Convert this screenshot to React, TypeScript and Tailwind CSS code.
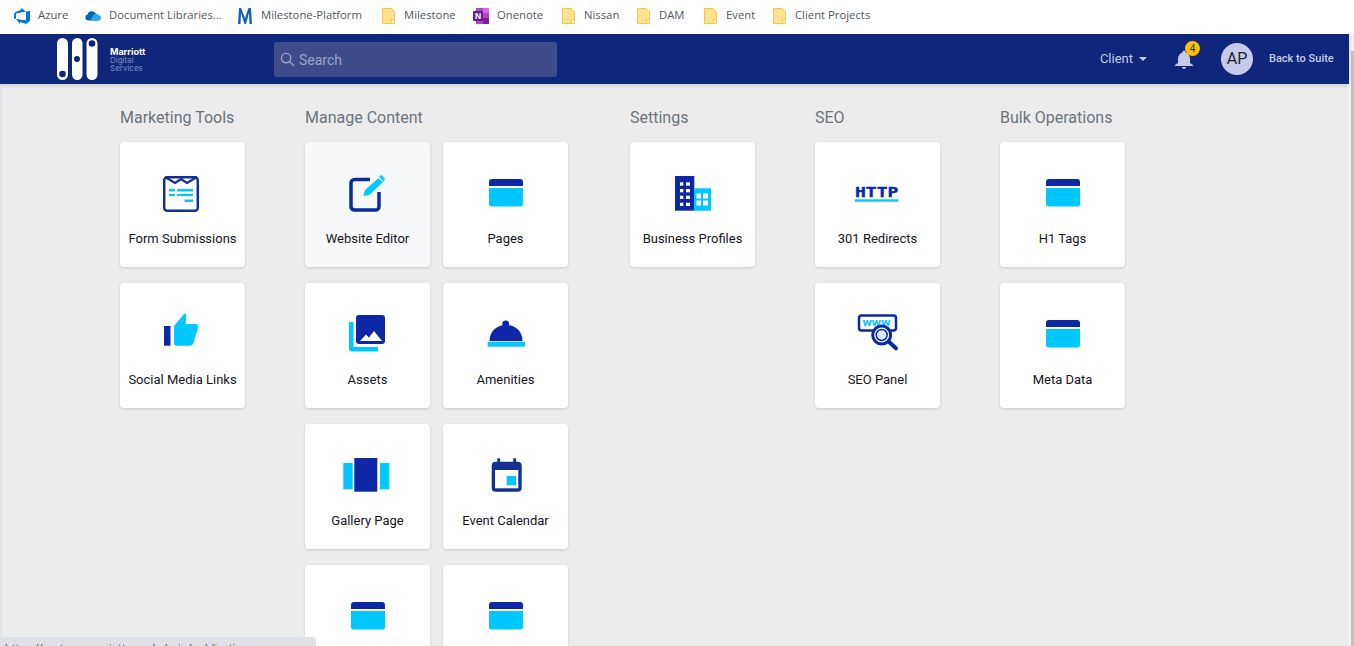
import { ReactNode } from "react"

const NAVY = "#0e27a6"
const CYAN = "#00c8ff"

const PagesIcon = () => (
  <g transform="translate(1 0)">
    <path d="M1 16V12a3 3 0 0 1 3-3h28a3 3 0 0 1 3 3v4z" fill={NAVY} />
    <path d="M1 18h34v16a2.500 2.500 0 0 1-2.500 2.500h-29A2.500 2.500 0 0 1 1 34z" fill={CYAN} />
  </g>
)

const FormIcon = () => (
  <>
    <rect x="0.200" y="7.200" width="33.600" height="33.600" rx="3" fill="none" stroke="#12308f" strokeWidth="2.500" />
    <path d="M1 7l10 6 6-4 6 4 10-6" fill="none" stroke="#12308f" strokeWidth="2.200" />
    <path d="M5 19h6v2.500H5zM13 19h16v2.500H13zM5 24h6v2H5zM13 24h16v2H13zM20.500 29.500H29V32h-8.500z" fill={CYAN} />
  </>
)

const EditorIcon = () => (
  <>
    <path
      d="M21 9.500H5.500A3.500 3.500 0 0 0 2 13v23.500A3.500 3.500 0 0 0 5.500 40h21a3.500 3.500 0 0 0 3.500-3.500V22"
      fill="none"
      stroke="#0c2aa0"
      strokeWidth="3.500"
    />
    <path d="M14.300 26l1.700-6L29.300 8.300l4.400 4L20.300 25z" fill={CYAN} />
    <path d="M30 6.600L32.700 5 36 9.300l-1.700 2.400z" fill={CYAN} />
  </>
)

const ThumbIcon = () => (
  <>
    <rect x="0" y="15" width="6.500" height="19.700" fill={NAVY} />
    <path
      d="M10 15L20 3q1.500-1 2.500 1l-1 9H32q3 0 2 4l-4.500 15q-1 2.700-3.500 2.700H12q-2 0-2-2.700z"
      fill={CYAN}
    />
  </>
)

const AssetsIcon = () => (
  <>
    <path d="M0 11h4.500v25H29v4.500H3q-3 0-3-3z" fill={CYAN} />
    <rect x="7" y="4" width="29" height="29" rx="3" fill={NAVY} />
    <path d="M11 30l6-6.500 3 3L25 20l8 10z" fill="#fff" />
  </>
)

const AmenitiesIcon = () => (
  <>
    <circle cx="18.700" cy="13" r="3.500" fill={NAVY} />
    <path d="M2.500 30C2.500 20 10 14 19 14s16.500 6 16.500 16z" fill={NAVY} />
    <rect x="0.700" y="30.700" width="37.300" height="5" fill={CYAN} />
  </>
)

const GalleryIcon = () => (
  <>
    <rect x="-5.700" y="11" width="9.400" height="26.300" fill={CYAN} />
    <rect x="5.300" y="6" width="23" height="33.700" fill={NAVY} />
    <rect x="31" y="11" width="9.300" height="26.300" fill={CYAN} />
  </>
)

const CalendarIcon = () => (
  <>
    <rect x="10.300" y="6.300" width="2.800" height="6" fill="#12308f" />
    <rect x="26.300" y="6.300" width="2.800" height="6" fill="#12308f" />
    <rect x="4.700" y="9.700" width="30" height="30" rx="4" fill="#12308f" />
    <rect x="8" y="18" width="23.300" height="18.300" fill="#fff" />
    <rect x="19.700" y="24" width="9.300" height="9.300" fill={CYAN} />
  </>
)

const BuildingIcon = () => (
  <>
    <rect x="1" y="6" width="19.300" height="34.700" fill={NAVY} />
    {[12.3, 19, 25.7, 32.7].map((y) => (
      <g key={y} fill="#fff">
        <rect x="6" y={y} width="3.300" height="3.300" />
        <rect x="12" y={y} width="4" height="3.300" />
      </g>
    ))}
    <rect x="20" y="18.300" width="17" height="22.400" fill={CYAN} />
    <g fill="#fff">
      <rect x="22.500" y="23.500" width="4.500" height="5" />
      <rect x="29" y="23.500" width="5" height="5" />
      <rect x="22.500" y="30.500" width="4.500" height="5" />
      <rect x="29" y="30.500" width="5" height="5" />
    </g>
  </>
)

const HttpIcon = () => (
  <>
    <text
      x="-4"
      y="27.300"
      fill={NAVY}
      stroke={NAVY}
      strokeWidth="0.400"
      fontSize="14.500"
      fontWeight="700"
      textLength="43.300"
      lengthAdjust="spacingAndGlyphs"
      className="font-['DejaVu_Sans_Mono',monospace]"
    >
      HTTP
    </text>
    <rect x="-4" y="29.300" width="43.300" height="2.400" fill={CYAN} />
  </>
)

const SeoIcon = () => (
  <>
    <rect x="0" y="4.500" width="37" height="15" rx="2.500" fill="none" stroke="#0c2aa0" strokeWidth="2.500" />
    <text
      x="3.500"
      y="15"
      fill={CYAN}
      fontSize="10"
      fontWeight="700"
      textLength="28"
      lengthAdjust="spacingAndGlyphs"
      className="font-['Roboto',sans-serif]"
    >
      www
    </text>
    <path d="M29 30l8 7.300" stroke="#0c2aa0" strokeWidth="4" strokeLinecap="round" />
    <circle cx="22.700" cy="24" r="9" fill="#fff" stroke="#0c2aa0" strokeWidth="3" />
    <circle cx="22.700" cy="24" r="5.500" fill="#dfe8fb" stroke="#0c2aa0" strokeWidth="1.500" />
  </>
)

const Card = ({ label, icon, active }: { label: string; icon: ReactNode; active?: boolean }) => (
  <div
    className={`flex h-[125px] w-[125px] flex-col items-center rounded-[4px] pt-7 shadow-[0_1px_3px_rgba(0,0,0,0.15)] ${
      active ? "bg-[#f7f8fa]" : "bg-white"
    }`}
  >
    <svg viewBox="0 0 36 42" className="mr-px h-[42px] w-9 shrink-0 overflow-visible">
      {icon}
    </svg>
    <span className="mt-[17px] text-[13px] leading-5 whitespace-nowrap text-[#15151c]">{label}</span>
  </div>
)

const Column = ({ title, className, children }: { title: string; className: string; children: ReactNode }) => (
  <section className={className}>
    <h2 className="mb-3 text-base leading-6 text-[#6c757d]">{title}</h2>
    {children}
  </section>
)

const Folder = () => (
  <svg viewBox="0 0 13 16" className="mr-px h-4 w-[13px] shrink-0">
    <path d="M.5.500h9l3 3v12H.5z" fill="#ffe28f" stroke="#f6c64c" />
    <rect x="9.500" y="11.500" width="3" height="4" fill="#fff3c9" stroke="#f6c64c" strokeWidth=".8" />
  </svg>
)

const bookmarks = [
  {
    label: "Azure",
    width: "w-[71px]",
    icon: (
      <svg viewBox="0 0 24 24" className="h-4 w-4 shrink-0" fill="#0078d4">
        <path d="M0 8.877L2.247 5.91l8.405-3.416V.022l7.37 5.393L2.966 8.338v8.225L0 15.707zm24-4.450v14.651l-5.753 4.900-9.303-3.057v3.056l-5.978-7.416 15.057 1.798V5.415z" />
      </svg>
    ),
  },
  {
    label: "Document Libraries...",
    width: "w-[153px]",
    icon: (
      <svg viewBox="0 0 17 11" className="-mr-px h-[11px] w-[17px] shrink-0">
        <path d="M3 10.500A3 3 0 0 1 2.500 4.600 4.500 4.500 0 0 1 10.500 3L14 10.500z" fill="#0364b8" />
        <path d="M5.500 10.500L8 5.500a4 4 0 0 1 6.500 0A2.700 2.700 0 0 1 14 10.500z" fill="#28a8ea" />
      </svg>
    ),
  },
  {
    label: "Milestone-Platform",
    width: "w-[144px]",
    icon: (
      <svg viewBox="0 0 14 16" className="mr-px h-4 w-[14px] shrink-0">
        <path d="M1 0h2L7 10 10.500 0H13l1 16h-2.500L11 5 8 16H6.500L3 5 2.500 16H0z" fill="#1164b4" />
      </svg>
    ),
  },
  { label: "Milestone", width: "w-[91px]", icon: <Folder /> },
  {
    label: "Onenote",
    width: "w-[89px]",
    icon: (
      <svg viewBox="0 0 16 16" className="h-4 w-4 shrink-0">
        <rect x="3" y="0" width="13" height="16" fill="#b146c2" />
        <rect x="10" y="0" width="6" height="5" fill="#d966e0" />
        <rect x="10" y="10" width="6" height="6" fill="#7e1f9b" />
        <rect x="0" y="3" width="10" height="10" rx="1" fill="#6a1b9a" />
        <text x="2" y="11" fill="#fff" fontSize="8.500" fontWeight="700" className="font-['Liberation_Sans',sans-serif]">
          N
        </text>
      </svg>
    ),
  },
  { label: "Nissan", width: "w-[75px]", icon: <Folder /> },
  { label: "DAM", width: "w-[67px]", icon: <Folder /> },
  { label: "Event", width: "w-[69px]", icon: <Folder /> },
  { label: "Client Projects", width: "w-[110px]", icon: <Folder /> },
]

export default function App() {
  return (
    <div className="relative flex h-[646px] w-[1354px] flex-col overflow-hidden bg-white font-['Roboto',sans-serif]">
      {/* browser bookmarks */}
      <nav className="flex h-[34px] shrink-0 items-center bg-white pb-[3px] pl-[14px] font-['Open_Sans',sans-serif] text-[11.300px] text-[#55585e]">
        {bookmarks.map((b) => (
          <div key={b.label} className={`flex items-center gap-2 ${b.width}`}>
            {b.icon}
            <span className="-mt-px whitespace-nowrap">{b.label}</span>
          </div>
        ))}
      </nav>

      <div className="flex min-h-0 flex-1">
        <div className="flex w-[1349px] flex-col">
          <header className="z-10 flex h-[50px] shrink-0 items-center bg-[#10267b] shadow-[0_2px_4px_rgba(0,0,0,0.12)]">
            <div className="flex w-[274px] items-center pl-[57px]">
              <svg viewBox="0 0 41 42" className="h-[42px] w-[41px] shrink-0">
                <rect x="0" y="0" width="11" height="42" rx="5.500" fill="#fff" />
                <rect x="15" y="0" width="10.500" height="42" rx="5.200" fill="#fff" />
                <rect x="29.500" y="0" width="11" height="42" rx="5.500" fill="#fff" />
                <circle cx="5.500" cy="36" r="3.300" fill="#10267b" />
                <circle cx="20" cy="21" r="3" fill="#10267b" />
                <circle cx="35" cy="5.500" r="3.300" fill="#10267b" />
              </svg>
              <div className="mt-px ml-3 flex flex-col font-['Inter',sans-serif] text-[8px] leading-[8px] text-[#7f8abf]">
                <span className="text-[9px] font-bold text-white">Marriott</span>
                <span>Digital</span>
                <span>Services</span>
              </div>
            </div>
            <div className="flex h-[35px] w-[283px] items-center gap-1 rounded-[3px] bg-[#3f4b8a] pl-[6px] text-sm text-[#9aa2c6]">
              <svg viewBox="0 0 16 16" className="h-[15px] w-[15px]" fill="none" stroke="#9aa2c6" strokeWidth="1.500">
                <circle cx="6.500" cy="6.500" r="5" />
                <path d="M10 10l5 5" />
              </svg>
              <span className="pt-0.5">Search</span>
            </div>
            <div className="ml-auto flex items-center text-[#c5cae9]">
              <span className="text-[13px]">Client</span>
              <span className="ml-[6px] h-0 w-0 border-x-4 border-t-4 border-x-transparent border-t-[#c5cae9]" />
              <div className="relative ml-7 h-5 w-[18px]">
                <svg viewBox="0 0 18 20" className="h-5 w-[18px]" fill="#c5cae9">
                  <path d="M9 1.500a1.500 1.500 0 0 1 1.500 1.500v.500C13 4.200 15 6.500 15 9.500V14l3 2v1H0v-1l3-2V9.500C3 6.500 5 4.200 7.500 3.500V3A1.500 1.500 0 0 1 9 1.500z" />
                  <path d="M7 18h4a2 2 0 0 1-4 0z" />
                </svg>
                <span className="absolute -top-[8px] left-[10px] flex h-[15px] w-[15px] items-center justify-center rounded-full bg-[#ffc107] text-[10px] text-[#333]">
                  4
                </span>
              </div>
              <div className="ml-7 flex h-8 w-8 items-center justify-center rounded-full bg-[#c5cae9] text-base text-[#222]">
                AP
              </div>
              <span className="mr-4 ml-4 w-[64px] text-[11px] font-medium whitespace-nowrap">Back to Suite</span>
            </div>
          </header>

          <main className="flex flex-1 border-l-2 border-[#e0e4e8] bg-[#ececec] pt-[22px] pl-[118px]">
            <Column title="Marketing Tools" className="w-[185px]">
              <div className="flex flex-col gap-4">
                <Card label="Form Submissions" icon={<FormIcon />} />
                <Card label="Social Media Links" icon={<ThumbIcon />} />
              </div>
            </Column>
            <Column title="Manage Content" className="w-[325px]">
              <div className="grid grid-cols-[125px_125px] gap-x-[13px] gap-y-4">
                <Card label="Website Editor" icon={<EditorIcon />} active />
                <Card label="Pages" icon={<PagesIcon />} />
                <Card label="Assets" icon={<AssetsIcon />} />
                <Card label="Amenities" icon={<AmenitiesIcon />} />
                <Card label="Gallery Page" icon={<GalleryIcon />} />
                <Card label="Event Calendar" icon={<CalendarIcon />} />
                <Card label="" icon={<PagesIcon />} />
                <Card label="" icon={<PagesIcon />} />
              </div>
            </Column>
            <Column title="Settings" className="w-[185px]">
              <Card label="Business Profiles" icon={<BuildingIcon />} />
            </Column>
            <Column title="SEO" className="w-[185px]">
              <div className="flex flex-col gap-4">
                <Card label="301 Redirects" icon={<HttpIcon />} />
                <Card label="SEO Panel" icon={<SeoIcon />} />
              </div>
            </Column>
            <Column title="Bulk Operations" className="w-[185px]">
              <div className="flex flex-col gap-4">
                <Card label="H1 Tags" icon={<PagesIcon />} />
                <Card label="Meta Data" icon={<PagesIcon />} />
              </div>
            </Column>
          </main>
        </div>

        {/* page scrollbar */}
        <div className="w-[5px] bg-[#f1f1f1] pt-[17px] pl-[2px]">
          <div className="h-full bg-[#c1c1c1]" />
        </div>
      </div>

      {/* link preview in the corner */}
      <div className="absolute bottom-0 left-0 h-[9px] w-[316px] overflow-hidden rounded-tr-[4px] bg-[#dee1e6] pt-[3px] pl-[5px] font-['Open_Sans',sans-serif] text-[11px] leading-4 whitespace-nowrap text-[#3c4043]">
        https://custom.marriott.com/admin/publications
      </div>
    </div>
  )
}
